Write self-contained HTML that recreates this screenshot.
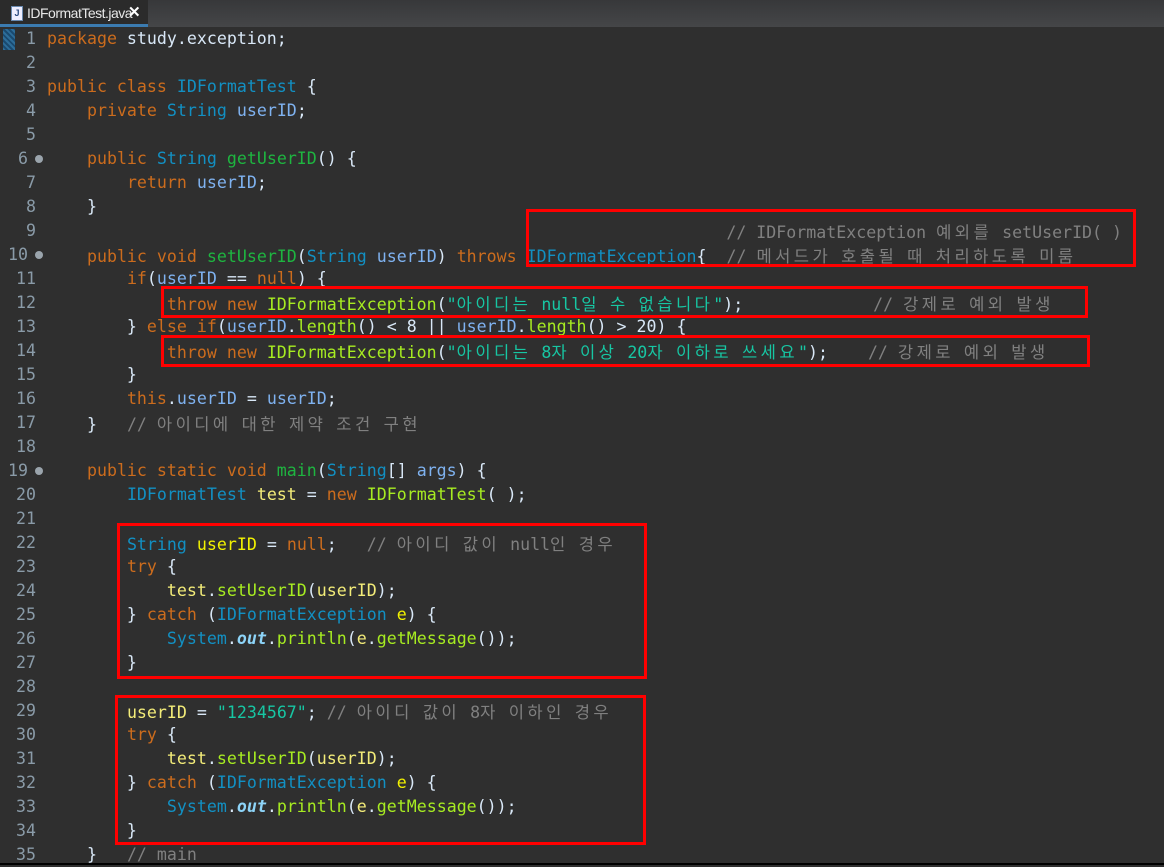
<!DOCTYPE html>
<html><head><meta charset="utf-8"><style>
body{margin:0;width:1164px;height:865px;background:#2f2f2f;overflow:hidden;position:relative;font-family:"DejaVu Sans Mono","Liberation Mono","Noto Sans CJK KR",monospace;}
#bar{position:absolute;left:0;top:0;width:1164px;height:27px;background:linear-gradient(#37383a,#454648);}
#tab{position:absolute;left:0;top:0;width:148px;height:24px;background:#2b2b2b;border-bottom:3px solid #3b7bb0;font-family:"Liberation Sans",sans-serif;font-size:14px;color:#e8e8e8;line-height:24px;}
#tab .ic{position:absolute;left:11px;top:6px;width:10px;height:13px;background:#eef;border:1px solid #6a8ab0;font-size:9px;line-height:12px;color:#2a4a80;text-align:center;font-weight:bold}
#tab .t{position:absolute;left:27px;top:1px;letter-spacing:-0.5px}
#tab .x{position:absolute;left:128px;top:1px;font-weight:bold;font-size:15px;color:#fff}
.marker{position:absolute;left:3px;top:29px;width:12px;height:21px;background:repeating-linear-gradient(45deg,#2d6d99 0 2px,#1a4a70 2px 4px);}
.ln{position:absolute;left:0;width:36px;text-align:right;color:#8a9ba8;font-size:16.6px;line-height:24px;height:24px}
.fold{position:absolute;left:35px;width:8px;height:8px;border-radius:50%;background:#9aa4ac}
.c{position:absolute;left:47px;white-space:pre;font-size:16.6px;line-height:24px;height:24px;color:#d9e8f7}
.k{letter-spacing:3.4px;font-family:"Noto Sans CJK KR",sans-serif;font-size:16.6px}
.kw{color:#cc6c1d}.ty{color:#1290c3}.f{color:#7fb2f0}.md{color:#1eb540}.mc{color:#a7ec21}.s{color:#17c6a3}.cm{color:#808080}.lv{color:#f3ec79}.ld{color:#f2f200}.o{color:#8dd4f8;font-style:italic;font-weight:bold}
.box{position:absolute;border:3px solid #f00;box-sizing:border-box}
#bot{position:absolute;left:0;top:863px;width:1164px;height:2px;background:#000}
</style></head><body>
<div id="bar"></div>
<div id="tab"><div class="ic">J</div><span class="t">IDFormatTest.java</span><span class="x">✕</span></div>
<div class="marker"></div>

<div class="ln" style="top:27px">1</div><div class="c" style="top:27px"><span class="kw">package</span> study.exception;</div>
<div class="ln" style="top:51px">2</div>
<div class="ln" style="top:75px">3</div><div class="c" style="top:75px"><span class="kw">public class</span> <span class="ty">IDFormatTest</span> {</div>
<div class="ln" style="top:99px">4</div><div class="c" style="top:99px">    <span class="kw">private</span> <span class="ty">String</span> <span class="f">userID</span>;</div>
<div class="ln" style="top:123px">5</div>
<div class="ln" style="top:147px;width:28px">6</div><div class="fold" style="top:155px"></div><div class="c" style="top:147px">    <span class="kw">public</span> <span class="ty">String</span> <span class="md">getUserID</span>() {</div>
<div class="ln" style="top:171px">7</div><div class="c" style="top:171px">        <span class="kw">return</span> <span class="f">userID</span>;</div>
<div class="ln" style="top:195px">8</div><div class="c" style="top:195px">    }</div>
<div class="ln" style="top:219px">9</div><div class="c" style="top:219px"><span class="cm">                                                                    // IDFormatException <span class="k">예외를</span> setUserID( )</span></div>
<div class="ln" style="top:243px;width:28px">10</div><div class="fold" style="top:251px"></div><div class="c" style="top:243px">    <span class="kw">public void</span> <span class="md">setUserID</span>(<span class="ty">String</span> <span class="f">userID</span>) <span class="kw">throws</span> <span class="ty">IDFormatException</span>{  <span class="cm">// <span class="k">메서드가</span> <span class="k">호출될</span> <span class="k">때</span> <span class="k">처리하도록</span> <span class="k">미룸</span></span></div>
<div class="ln" style="top:267px">11</div><div class="c" style="top:267px">        <span class="kw">if</span>(<span class="f">userID</span> == <span class="kw">null</span>) {</div>
<div class="ln" style="top:291px">12</div><div class="c" style="top:291px">            <span class="kw">throw new</span> <span class="mc">IDFormatException</span>(<span class="s">"<span class="k">아이디는</span> null<span class="k">일</span> <span class="k">수</span> <span class="k">없습니다</span>"</span>);             <span class="cm">// <span class="k">강제로</span> <span class="k">예외</span> <span class="k">발생</span></span></div>
<div class="ln" style="top:315px">13</div><div class="c" style="top:315px">        } <span class="kw">else if</span>(<span class="f">userID</span>.<span class="mc">length</span>() &lt; 8 || <span class="f">userID</span>.<span class="mc">length</span>() &gt; 20) {</div>
<div class="ln" style="top:339px">14</div><div class="c" style="top:339px">            <span class="kw">throw new</span> <span class="mc">IDFormatException</span>(<span class="s">"<span class="k">아이디는</span> 8<span class="k">자</span> <span class="k">이상</span> 20<span class="k">자</span> <span class="k">이하로</span> <span class="k">쓰세요</span>"</span>);    <span class="cm">// <span class="k">강제로</span> <span class="k">예외</span> <span class="k">발생</span></span></div>
<div class="ln" style="top:363px">15</div><div class="c" style="top:363px">        }</div>
<div class="ln" style="top:387px">16</div><div class="c" style="top:387px">        <span class="kw">this</span>.<span class="f">userID</span> = <span class="f">userID</span>;</div>
<div class="ln" style="top:411px">17</div><div class="c" style="top:411px">    }   <span class="cm">// <span class="k">아이디에</span> <span class="k">대한</span> <span class="k">제약</span> <span class="k">조건</span> <span class="k">구현</span></span></div>
<div class="ln" style="top:435px">18</div>
<div class="ln" style="top:459px;width:28px">19</div><div class="fold" style="top:467px"></div><div class="c" style="top:459px">    <span class="kw">public static void</span> <span class="md">main</span>(<span class="ty">String</span>[] <span class="f">args</span>) {</div>
<div class="ln" style="top:483px">20</div><div class="c" style="top:483px">        <span class="ty">IDFormatTest</span> <span class="lv">test</span> = <span class="kw">new</span> <span class="mc">IDFormatTest</span>( );</div>
<div class="ln" style="top:507px">21</div>
<div class="ln" style="top:531px">22</div><div class="c" style="top:531px">        <span class="ty">String</span> <span class="ld">userID</span> = <span class="kw">null</span>;   <span class="cm">// <span class="k">아이디</span> <span class="k">값이</span> null<span class="k">인</span> <span class="k">경우</span></span></div>
<div class="ln" style="top:555px">23</div><div class="c" style="top:555px">        <span class="kw">try</span> {</div>
<div class="ln" style="top:579px">24</div><div class="c" style="top:579px">            <span class="lv">test</span>.<span class="mc">setUserID</span>(<span class="lv">userID</span>);</div>
<div class="ln" style="top:603px">25</div><div class="c" style="top:603px">        } <span class="kw">catch</span> (<span class="ty">IDFormatException</span> <span class="ld">e</span>) {</div>
<div class="ln" style="top:627px">26</div><div class="c" style="top:627px">            <span class="ty">System</span>.<span class="o">out</span>.<span class="mc">println</span>(<span class="lv">e</span>.<span class="mc">getMessage</span>());</div>
<div class="ln" style="top:651px">27</div><div class="c" style="top:651px">        }</div>
<div class="ln" style="top:675px">28</div>
<div class="ln" style="top:699px">29</div><div class="c" style="top:699px">        <span class="lv">userID</span> = <span class="s">"1234567"</span>; <span class="cm">// <span class="k">아이디</span> <span class="k">값이</span> 8<span class="k">자</span> <span class="k">이하인</span> <span class="k">경우</span></span></div>
<div class="ln" style="top:723px">30</div><div class="c" style="top:723px">        <span class="kw">try</span> {</div>
<div class="ln" style="top:747px">31</div><div class="c" style="top:747px">            <span class="lv">test</span>.<span class="mc">setUserID</span>(<span class="lv">userID</span>);</div>
<div class="ln" style="top:771px">32</div><div class="c" style="top:771px">        } <span class="kw">catch</span> (<span class="ty">IDFormatException</span> <span class="ld">e</span>) {</div>
<div class="ln" style="top:795px">33</div><div class="c" style="top:795px">            <span class="ty">System</span>.<span class="o">out</span>.<span class="mc">println</span>(<span class="lv">e</span>.<span class="mc">getMessage</span>());</div>
<div class="ln" style="top:819px">34</div><div class="c" style="top:819px">        }</div>
<div class="ln" style="top:843px">35</div><div class="c" style="top:843px">    }   <span class="cm">// main</span></div>

<div class="box" style="left:526px;top:209px;width:610px;height:58px"></div>
<div class="box" style="left:161px;top:286px;width:927px;height:32px"></div>
<div class="box" style="left:161px;top:335px;width:929px;height:32px"></div>
<div class="box" style="left:117px;top:523px;width:530px;height:156px"></div>
<div class="box" style="left:115px;top:695px;width:531px;height:150px"></div>
<div id="bot"></div>
</body></html>
